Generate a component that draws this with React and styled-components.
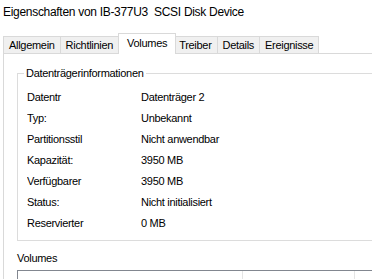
import React, { useState } from "react";
import styled, { createGlobalStyle } from "styled-components";

const GlobalStyle = createGlobalStyle`
  html, body {
    margin: 0;
    padding: 0;
    background: #ffffff;
    overflow: hidden;
  }
  body {
    font-family: "Liberation Sans", Arial, sans-serif;
    font-size: 11px;
    letter-spacing: -0.3px;
    color: #000000;
  }
`;

const tabs = ["Allgemein", "Richtlinien", "Volumes", "Treiber", "Details", "Ereignisse"];

const infoRows = [
  { label: "Datentr", value: "Datenträger 2" },
  { label: "Typ:", value: "Unbekannt" },
  { label: "Partitionsstil", value: "Nicht anwendbar" },
  { label: "Kapazität:", value: "3950 MB" },
  { label: "Verfügbarer", value: "3950 MB" },
  { label: "Status:", value: "Nicht initialisiert" },
  { label: "Reservierter", value: "0 MB" },
];

const App = () => {
  const [active, setActive] = useState("Volumes");

  return (
    <>
      <GlobalStyle />
      <Window>
        <TitleBar>Eigenschaften von IB-377U3&nbsp; SCSI Disk Device</TitleBar>
        <TabStrip>
          {tabs.map((t) => (
            <Tab key={t} $active={t === active} onClick={() => setActive(t)}>
              {t}
            </Tab>
          ))}
        </TabStrip>
        <Panel>
          <Group>
            <GroupLegend>Datenträgerinformationen</GroupLegend>
            <InfoGrid>
              {infoRows.map((row) => (
                <React.Fragment key={row.label}>
                  <InfoLabel>{row.label}</InfoLabel>
                  <InfoValue>{row.value}</InfoValue>
                </React.Fragment>
              ))}
            </InfoGrid>
          </Group>
          <SectionLabel>Volumes</SectionLabel>
          <ListView>
            <ListHeader>
              <HeaderCell $width="225px">Volume</HeaderCell>
              <HeaderCell $width="112px">Kapazität</HeaderCell>
              <HeaderCell $width="60px"></HeaderCell>
            </ListHeader>
          </ListView>
        </Panel>
      </Window>
    </>
  );
};

const Window = styled.div`
  width: 400px;
  height: 279px;
  background: #ffffff;
  overflow: hidden;
`;

const TitleBar = styled.div`
  height: 24px;
  padding-left: 3px;
  font-size: 12px;
  line-height: 24px;
  white-space: nowrap;
`;

const TabStrip = styled.div`
  display: flex;
  align-items: flex-end;
  height: 20px;
  margin-top: 10px;
  padding-left: 3px;
  position: relative;
  z-index: 1;
`;

const Tab = styled.div`
  box-sizing: border-box;
  height: ${(p) => (p.$active ? "21px" : "18px")};
  padding: 0 ${(p) => (p.$active ? "8px" : "5px")};
  margin: 0 ${(p) => (p.$active ? "-2px" : "0")} 0 -1px;
  border: 1px solid #d9d9d9;
  border-bottom: ${(p) => (p.$active ? "none" : "1px solid #d9d9d9")};
  background: ${(p) => (p.$active ? "#ffffff" : "#f0f0f0")};
  line-height: ${(p) => (p.$active ? "18px" : "16px")};
  position: relative;
  z-index: ${(p) => (p.$active ? 2 : 1)};
  white-space: nowrap;
  cursor: default;

  &:first-child {
    margin-left: 0;
  }
`;

const Panel = styled.div`
  margin-left: 3px;
  margin-top: -1px;
  border-left: 1px solid #d9d9d9;
  border-top: 1px solid #d9d9d9;
  padding: 12px 0 0 13px;
  height: 260px;
  box-sizing: border-box;
`;

const Group = styled.fieldset`
  margin: 0;
  width: 380px;
  box-sizing: border-box;
  border: 1px solid #dcdcdc;
  padding: 6px 0 7px 9px;
`;

const GroupLegend = styled.legend`
  margin-left: -3px;
  padding: 0 2px;
  line-height: 14px;
`;

const InfoGrid = styled.div`
  display: grid;
  grid-template-columns: 114px 1fr;
  grid-auto-rows: 21px;
  align-items: center;
`;

const InfoLabel = styled.div`
  white-space: nowrap;
  overflow: hidden;
`;

const InfoValue = styled.div`
  white-space: nowrap;
`;

const SectionLabel = styled.div`
  margin-top: 10px;
  line-height: 14px;
`;

const ListView = styled.div`
  margin-top: 5px;
  width: 400px;
  height: 40px;
  border: 1px solid #828790;
  box-sizing: border-box;
`;

const ListHeader = styled.div`
  display: flex;
  height: 24px;
`;

const HeaderCell = styled.div`
  width: ${(p) => p.$width};
  flex-shrink: 0;
  box-sizing: border-box;
  padding: 9px 0 0 7px;
  border-right: 1px solid #e5e5e5;
  white-space: nowrap;
`;

export default App;
